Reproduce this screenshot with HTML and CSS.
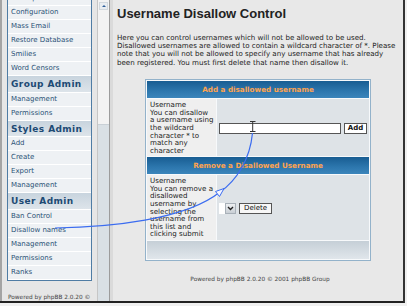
FILE: index.html
```html
<!DOCTYPE html>
<html lang="en">
<head>
    <meta charset="UTF-8">
    <meta name="viewport" content="width=device-width, initial-scale=1.0">
    <title>Username Disallow Control</title>
    <link rel="stylesheet" href="styles.css">
</head>
<body>

    <div class="window">

        <!-- Admin navigation frame -->
        <div class="nav-frame">
            <div class="nav-scroll">
                <div class="nav-box">
                    <div class="nav-item">Backup Database</div>
                    <div class="nav-item">Configuration</div>
                    <div class="nav-item">Mass Email</div>
                    <div class="nav-item">Restore Database</div>
                    <div class="nav-item">Smilies</div>
                    <div class="nav-item">Word Censors</div>
                    <div class="nav-head">Group Admin</div>
                    <div class="nav-item">Management</div>
                    <div class="nav-item">Permissions</div>
                    <div class="nav-head">Styles Admin</div>
                    <div class="nav-item">Add</div>
                    <div class="nav-item">Create</div>
                    <div class="nav-item">Export</div>
                    <div class="nav-item">Management</div>
                    <div class="nav-head">User Admin</div>
                    <div class="nav-item">Ban Control</div>
                    <div class="nav-item">Disallow names</div>
                    <div class="nav-item">Management</div>
                    <div class="nav-item">Permissions</div>
                    <div class="nav-item">Ranks</div>
                </div>
                <p class="nav-powered">Powered by phpBB 2.0.20 &copy;</p>
            </div>
            <div class="scrollbar">
                <div class="scroll-thumb">
                    <div class="scroll-up"></div>
                </div>
            </div>
        </div>

        <div class="divider"></div>

        <!-- Main frame -->
        <div class="main">
            <h1>Username Disallow Control</h1>
            <p class="intro">Here you can control usernames which will not be allowed to be used.<br>Disallowed usernames are allowed to contain a wildcard character of *. Please<br>note that you will not be allowed to specify any username that has already<br>been registered. You must first delete that name then disallow it.</p>

            <table class="forumline">
                <tr>
                    <th colspan="2">Add a disallowed username</th>
                </tr>
                <tr>
                    <td class="row1">Username<br>You can disallow<br>a username using<br>the wildcard<br>character * to<br>match any<br>character</td>
                    <td class="row2"><span class="post">&nbsp;</span><span class="btn btn-main">Add</span></td>
                </tr>
                <tr>
                    <th colspan="2">Remove a Disallowed Username</th>
                </tr>
                <tr>
                    <td class="row1">Username<br>You can remove a<br>disallowed<br>username by<br>selecting the<br>username from<br>this list and<br>clicking submit</td>
                    <td class="row2"><span class="select"><span class="select-field"></span><span class="select-arrow"><svg width="7" height="5" viewBox="0 0 7 5"><path d="M1 1 L3.5 3.5 L6 1" fill="none" stroke="#222" stroke-width="1.4"/></svg></span></span><span class="btn">Delete</span></td>
                </tr>
                <tr>
                    <td class="catbottom" colspan="2"></td>
                </tr>
            </table>

            <p class="copyright">Powered by phpBB 2.0.20 &copy; 2001 phpBB Group</p>
        </div>

        <!-- annotation drawn over the screenshot -->
        <svg class="annotation" width="405" height="303" viewBox="0 0 405 303">
            <path d="M55,228 C110,227 185,220 220,192 C236,181 250,160 252.5,133" fill="none" stroke="#3b6cf0" stroke-width="1.2"/>
            <polygon points="224,188.5 215.5,191.5 219.5,196.5" fill="#f4f6ff" stroke="#3b6cf0" stroke-width="1"/>
            <path d="M250,121.5 H255.5 M252.7,121.5 V131.5 M250,131.5 H255.5" fill="none" stroke="#333" stroke-width="1"/>
        </svg>
    </div>

</body>
</html>
```

FILE: styles.css
```css
/* phpBB admin screen */
body {
    margin: 0;
    padding: 0;
    background-color: #f0f0f0;
    font-family: 'DejaVu Sans', Verdana, sans-serif;
}

.window {
    position: relative;
    display: flex;
    width: 403px;
    height: 301px;
    border-right: 2px solid #333333;
    border-bottom: 2px solid #222222;
    background-color: #e8e8e8;
    overflow: hidden;
}

/* Navigation frame */
.nav-frame {
    display: flex;
    width: 108px;
    border-left: 2px solid #a4a4a4;
    background-color: #e6e6e6;
}

.nav-scroll {
    width: 90px;
    padding-left: 5px;
    overflow: hidden;
}

.nav-box {
    width: 83px;
    margin-top: -9px;
    border: 1px solid #4f7ca4;
    background-color: #eef1f4;
}

.nav-item {
    box-sizing: border-box;
    height: 14px;
    padding-left: 3px;
    border-bottom: 1px solid #ffffff;
    font-size: 7px;
    line-height: 13px;
    color: #2b5177;
    white-space: nowrap;
}

.nav-head {
    box-sizing: border-box;
    height: 16.5px;
    padding-left: 3px;
    border-bottom: 1px solid #ffffff;
    background: linear-gradient(#c8d4de, #dde4ea);
    font-size: 9px;
    font-weight: bold;
    letter-spacing: 0.4px;
    line-height: 16px;
    color: #1d4a74;
    white-space: nowrap;
}

.nav-powered {
    margin: 13px 0 0 1px;
    font-size: 5.8px;
    color: #444444;
    white-space: nowrap;
}

.scrollbar {
    width: 11px;
    border-left: 1px solid #c6c6c6;
    border-right: 1px solid #9c9c9c;
    background-color: #d9e0e5;
}

.scroll-thumb {
    height: 122px;
    padding-top: 2px;
    background-color: #f3f3f3;
    border-bottom: 1px solid #c9d0d6;
}

.scroll-up {
    width: 9px;
    height: 8px;
    margin-left: 1px;
    background-color: #e9edf1;
    border: 1px solid #d2d8dd;
    box-sizing: border-box;
    position: relative;
}

.scroll-up::after {
    content: "";
    position: absolute;
    left: 2px;
    top: 2px;
    border-left: 2px solid transparent;
    border-right: 2px solid transparent;
    border-bottom: 2px solid #2f5f9a;
}

.divider {
    width: 3px;
    background-color: #dadada;
}

/* Main frame */
.main {
    flex: 1;
    padding-left: 4px;
}

.main h1 {
    margin: 6px 0 0;
    font-family: 'Liberation Sans', Arial, sans-serif;
    font-size: 13px;
    line-height: 16px;
    color: #222222;
}

.intro {
    margin: 11.5px 0 0;
    font-size: 7.1px;
    line-height: 8.4px;
    color: #222222;
    white-space: nowrap;
}

.forumline {
    margin: 12px 0 0 28px;
    width: 226px;
    border: 1px solid #93b2ca;
    border-spacing: 1px;
    background-color: #f7f9fb;
}

.forumline th {
    height: 17px;
    padding: 0;
    background: linear-gradient(#185d92, #2d77ae 60%, #3b85bb);
    font-size: 7.2px;
    font-weight: bold;
    color: #ffa34f;
    text-align: center;
}

.forumline td {
    padding: 0;
}

.row1 {
    width: 66px;
    padding: 2px 0 2px 3px !important;
    background-color: #efefef;
    font-size: 7.1px;
    line-height: 7.6px;
    color: #222222;
    white-space: nowrap;
    vertical-align: top;
}

.row2 {
    padding-left: 2px !important;
    background-color: #dee3e7;
    white-space: nowrap;
    vertical-align: middle;
}

.post {
    display: inline-block;
    box-sizing: border-box;
    width: 122px;
    height: 11px;
    border: 1px solid #555555;
    background-color: #ffffff;
    vertical-align: middle;
}

.btn {
    display: inline-block;
    box-sizing: border-box;
    height: 11px;
    margin-left: 3px;
    padding: 0 4px;
    border: 1px solid #555555;
    background-color: #f7f7f7;
    font-size: 7px;
    line-height: 9px;
    color: #111111;
    vertical-align: middle;
}

.btn-main {
    width: 23px;
    padding: 0;
    background-color: #ffffff;
    font-weight: bold;
    text-align: center;
}

.select {
    display: inline-flex;
    height: 11px;
    vertical-align: middle;
}

.select-field {
    width: 6px;
    background-color: #ffffff;
}

.select-arrow {
    display: flex;
    align-items: center;
    justify-content: center;
    box-sizing: border-box;
    width: 11px;
    border: 1px solid #a8b0b8;
    background: linear-gradient(#eef0f2, #c9cfd5);
}

.catbottom {
    height: 18px;
    background: linear-gradient(#c5cfd7, #e0e6eb);
}

.copyright {
    margin: 15px 0 0;
    font-size: 5.8px;
    color: #444444;
    text-align: center;
}

.annotation {
    position: absolute;
    left: 0;
    top: 0;
    pointer-events: none;
}
```
